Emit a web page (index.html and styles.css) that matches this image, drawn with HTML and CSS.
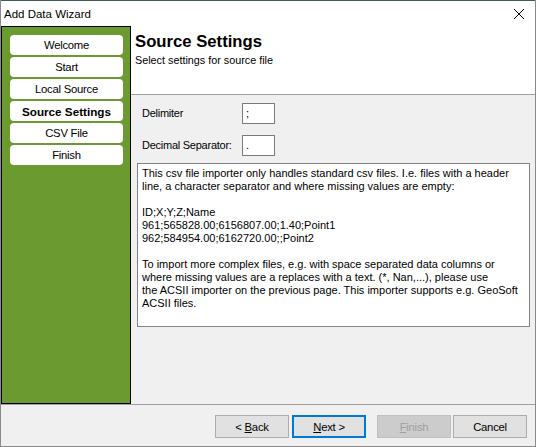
FILE: index.html
```html
<!DOCTYPE html>
<html>
<head>
<meta charset="utf-8">
<link rel="stylesheet" href="styles.css">
</head>
<body>
<div class="window">
  <div class="titlebar">
    <span class="title">Add Data Wizard</span>
    <svg class="close" width="12" height="12" viewBox="0 0 12 12"><path d="M1 1 L11 11 M11 1 L1 11" stroke="#000" stroke-width="1" fill="none"/></svg>
  </div>
  <div class="main">
    <div class="sidebar">
      <div class="step">Welcome</div>
      <div class="step">Start</div>
      <div class="step">Local Source</div>
      <div class="step active">Source Settings</div>
      <div class="step">CSV File</div>
      <div class="step">Finish</div>
    </div>
    <div class="content">
      <div class="header">
        <div class="h-title">Source Settings</div>
        <div class="h-sub">Select settings for source file</div>
      </div>
      <div class="body">
        <div class="row">
          <span class="label">Delimiter</span>
          <span class="input">;</span>
        </div>
        <div class="row">
          <span class="label">Decimal Separator:</span>
          <span class="input">.</span>
        </div>
        <div class="info">
          <div>This csv file importer only handles standard csv files. I.e. files with a header</div>
          <div>line, a character separator and where missing values are empty:</div>
          <div class="blank"></div>
          <div>ID;X;Y;Z;Name</div>
          <div>961;565828.00;6156807.00;1.40;Point1</div>
          <div>962;584954.00;6162720.00;;Point2</div>
          <div class="blank"></div>
          <div>To import more complex files, e.g. with space separated data columns or</div>
          <div>where missing values are a replaces with a text. (*, Nan,...), please use</div>
          <div>the ACSII importer on the previous page. This importer supports e.g. GeoSoft</div>
          <div>ACSII files.</div>
        </div>
      </div>
    </div>
  </div>
  <div class="footer">
    <div class="btn">&lt;&nbsp;<u>B</u>ack</div>
    <div class="btn default"><u>N</u>ext&nbsp;&gt;</div>
    <div class="btn disabled"><u>F</u>inish</div>
    <div class="btn cancel">Cancel</div>
  </div>
</div>
</body>
</html>
```

FILE: styles.css
```css
html, body {
  margin: 0;
  padding: 0;
  background: #ffffff;
}
.window {
  width: 536px;
  height: 447px;
  box-sizing: border-box;
  border-left: 1px solid #8a8a8a;
  border-right: 1px solid #8a8a8a;
  border-bottom: 1px solid #8a8a8a;
  background: #f0f0f0;
  font-family: "Liberation Sans", Arial, sans-serif;
  font-size: 11px;
  letter-spacing: -0.25px;
  color: #000;
  display: flex;
  flex-direction: column;
  overflow: hidden;
}
.titlebar {
  height: 26px;
  box-sizing: border-box;
  border-top: 1px solid #3f5a58;
  background: #ffffff;
  display: flex;
  align-items: center;
  justify-content: space-between;
  padding: 0 10px 0 3px;
}
.title {
  font-size: 11.5px;
  letter-spacing: 0;
}
.close {
  display: block;
}
.main {
  height: 378px;
  display: flex;
}
.sidebar {
  width: 130px;
  box-sizing: border-box;
  border: 1px solid #000;
  background: #6a9a30;
  padding: 8px 7px 0 8px;
  display: flex;
  flex-direction: column;
  gap: 2px;
}
.step {
  height: 20px;
  background: #ffffff;
  border-radius: 4px;
  display: flex;
  align-items: center;
  justify-content: center;
  font-size: 11.3px;
}
.step.active {
  font-weight: bold;
  font-size: 11.7px;
  letter-spacing: 0;
}
.content {
  flex: 1;
  display: flex;
  flex-direction: column;
}
.header {
  background: #ffffff;
  border-bottom: 1px solid #a0a0a0;
  padding: 5px 0 0 4px;
  box-sizing: border-box;
  height: 69px;
}
.h-title {
  font-weight: bold;
  font-size: 16.7px;
  letter-spacing: 0;
  line-height: 21px;
}
.h-sub {
  font-size: 10.8px;
  letter-spacing: 0;
  line-height: 14px;
  margin-top: 1px;
}
.body {
  flex: 1;
  padding: 7px 5px 0 6px;
  display: flex;
  flex-direction: column;
}
.row {
  display: flex;
  align-items: center;
  height: 22px;
  margin-bottom: 10px;
}
.label {
  width: 100px;
  padding-left: 5px;
  white-space: nowrap;
}
.input {
  width: 33px;
  height: 21px;
  box-sizing: border-box;
  border: 1px solid #7a7a7a;
  background: #fff;
  padding-left: 3px;
  line-height: 19px;
}
.info {
  margin-top: -3px;
  height: 164px;
  box-sizing: border-box;
  border: 1px solid #828282;
  background: #ffffff;
  padding: 3px 4px;
  font-size: 11px;
  letter-spacing: 0;
  line-height: 13px;
  white-space: nowrap;
  overflow: hidden;
}
.blank {
  height: 13px;
}
.footer {
  flex: 1;
  border-top: 1px solid #a0a0a0;
  display: flex;
  justify-content: flex-end;
  align-items: flex-start;
  padding: 10px 8px 0 0;
}
.btn {
  width: 74px;
  height: 23px;
  box-sizing: border-box;
  background: #e1e1e1;
  border: 1px solid #adadad;
  display: flex;
  align-items: center;
  justify-content: center;
  margin-left: 3px;
  font-size: 11.3px;
}
.btn.default {
  border: 2px solid #0078d7;
}
.btn.disabled {
  background: #cccccc;
  border-color: #bfbfbf;
  color: #a0a0a0;
  margin-left: 11px;
}
.btn.cancel {
  margin-left: 2px;
}
```
